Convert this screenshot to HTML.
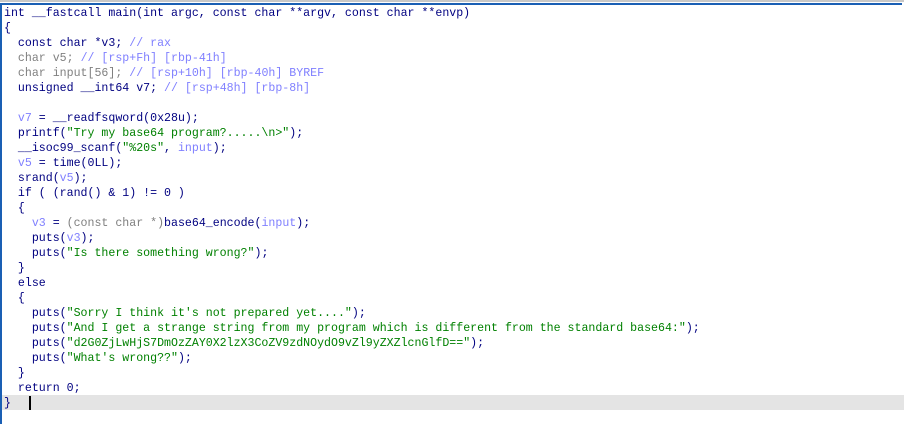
<!DOCTYPE html>
<html><head><style>
html,body{margin:0;padding:0;background:#fff;width:904px;height:424px;overflow:hidden}
.top{position:absolute;left:0;top:0;width:904px;height:2px;background:#c8c8c8}
.frame{position:absolute;left:0;top:3px;width:902px;height:421px;border-left:2px solid #1a5fb4;border-top:2px solid #1a5fb4;box-sizing:border-box}
.cur{position:absolute;left:2px;top:395px;width:902px;height:15px;background:#e4e4e4}
.caret{position:absolute;left:29px;top:396px;width:2px;height:14px;background:#000}
pre{position:absolute;left:4px;top:6px;margin:0;font-family:"Liberation Mono",monospace;font-size:11.6px;line-height:15px;color:#000080}
.c{color:#8080ff}.g{color:#808080}.s{color:#008000}
</style></head><body>
<div class="top"></div><div class="frame"></div><div class="cur"></div><div class="caret"></div>
<pre>int __fastcall main(int argc, const char **argv, const char **envp)
{
  const char *v3; <span class="c">// rax</span>
  <span class="g">char v5;</span> <span class="c">// [rsp+Fh] [rbp-41h]</span>
  <span class="g">char input[56];</span> <span class="c">// [rsp+10h] [rbp-40h] BYREF</span>
  unsigned __int64 v7; <span class="c">// [rsp+48h] [rbp-8h]</span>

  <span class="c">v7</span> = __readfsqword(0x28u);
  printf(<span class="s">"Try my base64 program?.....\n&gt;"</span>);
  __isoc99_scanf(<span class="s">"%20s"</span>, <span class="c">input</span>);
  <span class="c">v5</span> = time(0LL);
  srand(<span class="c">v5</span>);
  if ( (rand() &amp; 1) != 0 )
  {
    <span class="c">v3</span> = <span class="g">(const char *)</span>base64_encode(<span class="c">input</span>);
    puts(<span class="c">v3</span>);
    puts(<span class="s">"Is there something wrong?"</span>);
  }
  else
  {
    puts(<span class="s">"Sorry I think it's not prepared yet...."</span>);
    puts(<span class="s">"And I get a strange string from my program which is different from the standard base64:"</span>);
    puts(<span class="s">"d2G0ZjLwHjS7DmOzZAY0X2lzX3CoZV9zdNOydO9vZl9yZXZlcnGlfD=="</span>);
    puts(<span class="s">"What's wrong??"</span>);
  }
  return 0;
}</pre>
</body></html>
